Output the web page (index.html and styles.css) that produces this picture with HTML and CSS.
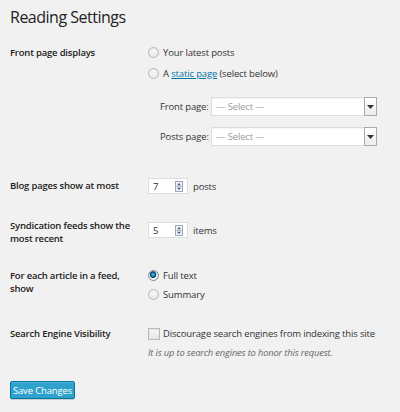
FILE: index.html
```html
<!DOCTYPE html>
<html lang="en">
<head>
<meta charset="utf-8">
<title>Reading Settings</title>
<link rel="stylesheet" href="styles.css">
</head>
<body>
<div class="wrap">
  <h1 class="title">Reading Settings</h1>
  <form class="form">
    <div class="row row-front">
      <div class="label">Front page displays</div>
      <div class="field">
        <label class="choice"><input type="radio" name="show" class="radio"><span>Your latest posts</span></label>
        <label class="choice choice-second"><input type="radio" name="show" class="radio"><span>A <a href="#" class="link">static page</a> (select below)</span></label>
        <div class="pick pick-first">
          <span class="pick-label">Front page:</span>
          <div class="select"><span class="select-text">— Select —</span><span class="select-btn"><svg width="7" height="4" viewBox="0 0 7 4"><path d="M0 0H7L3.5 4Z" fill="#333"/></svg></span></div>
        </div>
        <div class="pick pick-second">
          <span class="pick-label">Posts page:</span>
          <div class="select"><span class="select-text">— Select —</span><span class="select-btn"><svg width="7" height="4" viewBox="0 0 7 4"><path d="M0 0H7L3.5 4Z" fill="#333"/></svg></span></div>
        </div>
      </div>
    </div>

    <div class="row row-blog">
      <div class="label label-mid">Blog pages show at most</div>
      <div class="field inline">
        <div class="num"><span class="num-val">7</span><svg class="spin" width="8" height="11" viewBox="0 0 8 11"><rect x="0.5" y="0.5" width="7" height="10" fill="#eef2f7" stroke="#9aa8bb"/><line x1="1" y1="5.5" x2="7" y2="5.5" stroke="#b8c2d0"/><path d="M2 4.2H6L4 2Z" fill="#4b5d78"/><path d="M2 6.8H6L4 9Z" fill="#4b5d78"/></svg></div>
        <span class="unit">posts</span>
      </div>
    </div>

    <div class="row row-synd">
      <div class="label">Syndication feeds show the most recent</div>
      <div class="field inline synd-field">
        <div class="num"><span class="num-val">5</span><svg class="spin" width="8" height="11" viewBox="0 0 8 11"><rect x="0.5" y="0.5" width="7" height="10" fill="#eef2f7" stroke="#9aa8bb"/><line x1="1" y1="5.5" x2="7" y2="5.5" stroke="#b8c2d0"/><path d="M2 4.2H6L4 2Z" fill="#4b5d78"/><path d="M2 6.8H6L4 9Z" fill="#4b5d78"/></svg></div>
        <span class="unit">items</span>
      </div>
    </div>

    <div class="row row-feed">
      <div class="label">For each article in a feed, show</div>
      <div class="field">
        <label class="choice"><input type="radio" name="feed" class="radio" checked><span>Full text</span></label>
        <label class="choice choice-summary"><input type="radio" name="feed" class="radio"><span>Summary</span></label>
      </div>
    </div>

    <div class="row row-search">
      <div class="label">Search Engine Visibility</div>
      <div class="field">
        <label class="choice check-line"><input type="checkbox" class="check"><span>Discourage search engines from indexing this site</span></label>
        <p class="note">It is up to search engines to honor this request.</p>
      </div>
    </div>

    <div class="submit">
      <button type="button" class="button">Save Changes</button>
    </div>
  </form>
</div>
</body>
</html>
```

FILE: styles.css
```css
html, body {
  margin: 0;
  padding: 0;
  background: #f1f1f1;
}
body {
  font-family: "Open Sans", "Noto Sans", sans-serif;
  font-size: 9.5px;
  letter-spacing: -0.15px;
  line-height: 13px;
  color: #333;
  width: 400px;
  height: 412px;
  overflow: hidden;
}
.wrap {
  padding: 0 10px;
}
.title {
  margin: 0;
  padding-top: 6px;
  font-size: 16px;
  letter-spacing: -0.5px;
  line-height: 22px;
  font-weight: 400;
  color: #222;
}
.form {
  margin: 0;
}
.row {
  display: grid;
  grid-template-columns: 138px 1fr;
}
.label {
  font-weight: 600;
  letter-spacing: -0.2px;
  color: #222;
  padding-right: 8px;
}
.row-front { margin-top: 18px; }
.row-blog { margin-top: 32px; }
.row-synd { margin-top: 25px; }
.row-feed { margin-top: 24px; }
.row-search { margin-top: 26px; }

.label-mid { line-height: 16px; }

.choice {
  display: flex;
  align-items: center;
  height: 13px;
  color: #333;
  gap: 4px;
  white-space: nowrap;
}
.choice-second { margin-top: 8px; }
.choice-summary { margin-top: 6px; }

.radio {
  -webkit-appearance: none;
  appearance: none;
  margin: 0;
  width: 11px;
  height: 11px;
  border: 1px solid #b4b9be;
  border-radius: 50%;
  background: linear-gradient(#fdfdfd, #e8e8e8);
  box-shadow: inset 0 1px 2px rgba(0,0,0,.1);
  box-sizing: border-box;
  flex: none;
}
.radio:checked {
  border-color: #7b8a98;
  background: radial-gradient(circle at 45% 40%, #7fd0f5 0, #1e8cbe 1.3px, #0a3d66 3px, #f4f4f4 3.6px, #e8e8e8 100%);
}
.check {
  -webkit-appearance: none;
  appearance: none;
  margin: 0;
  width: 12px;
  height: 12px;
  border: 1px solid #b4b9be;
  background: linear-gradient(#f8f8f8, #e6e6e6);
  box-shadow: inset 0 1px 2px rgba(0,0,0,.08);
  box-sizing: border-box;
  flex: none;
}
.check-line { gap: 3px; }
.link {
  color: #0074a2;
  text-decoration: underline;
}

.pick {
  display: flex;
  align-items: center;
  padding-left: 12px;
}
.pick-first { margin-top: 17px; }
.pick-second { margin-top: 11px; }
.pick-label {
  width: 51px;
  white-space: nowrap;
  color: #333;
}
.select {
  display: flex;
  width: 166px;
  height: 19px;
  box-sizing: border-box;
  border: 1px solid #ddd;
  background: #fff;
  box-shadow: inset 0 1px 2px rgba(0,0,0,.05);
}
.select-text {
  flex: 1;
  padding-left: 4px;
  line-height: 17px;
  color: #999;
}
.select-btn {
  width: 13px;
  margin: -1px -1px -1px 0;
  box-sizing: border-box;
  border: 1px solid #aaa;
  background: linear-gradient(#fff, #ececec);
  display: flex;
  align-items: center;
  justify-content: center;
}

.inline {
  display: flex;
  align-items: center;
  gap: 5px;
  height: 16px;
}
.synd-field { margin-top: 3px; }
.num {
  display: flex;
  align-items: center;
  width: 40px;
  height: 16px;
  box-sizing: border-box;
  border: 1px solid #ddd;
  background: #fff;
  padding-left: 4px;
  padding-right: 4px;
}
.num-val {
  flex: 1;
  color: #333;
}
.spin { display: block; }
.unit { color: #333; }

.note {
  margin: 6px 0 0;
  font-style: italic;
  color: #666;
  font-size: 9.3px;
  white-space: nowrap;
}

.submit {
  margin-top: 22px;
}
.button {
  font-family: inherit;
  font-size: 9.5px;
  letter-spacing: -0.15px;
  line-height: 15px;
  height: 18px;
  width: 65px;
  padding: 0;
  color: #fff;
  background: #2ea2cc;
  border: 1px solid #0074a2;
  border-radius: 2px;
  box-shadow: inset 0 1px 0 rgba(120,200,230,.5), 0 1px 0 rgba(0,0,0,.15);
}
```
